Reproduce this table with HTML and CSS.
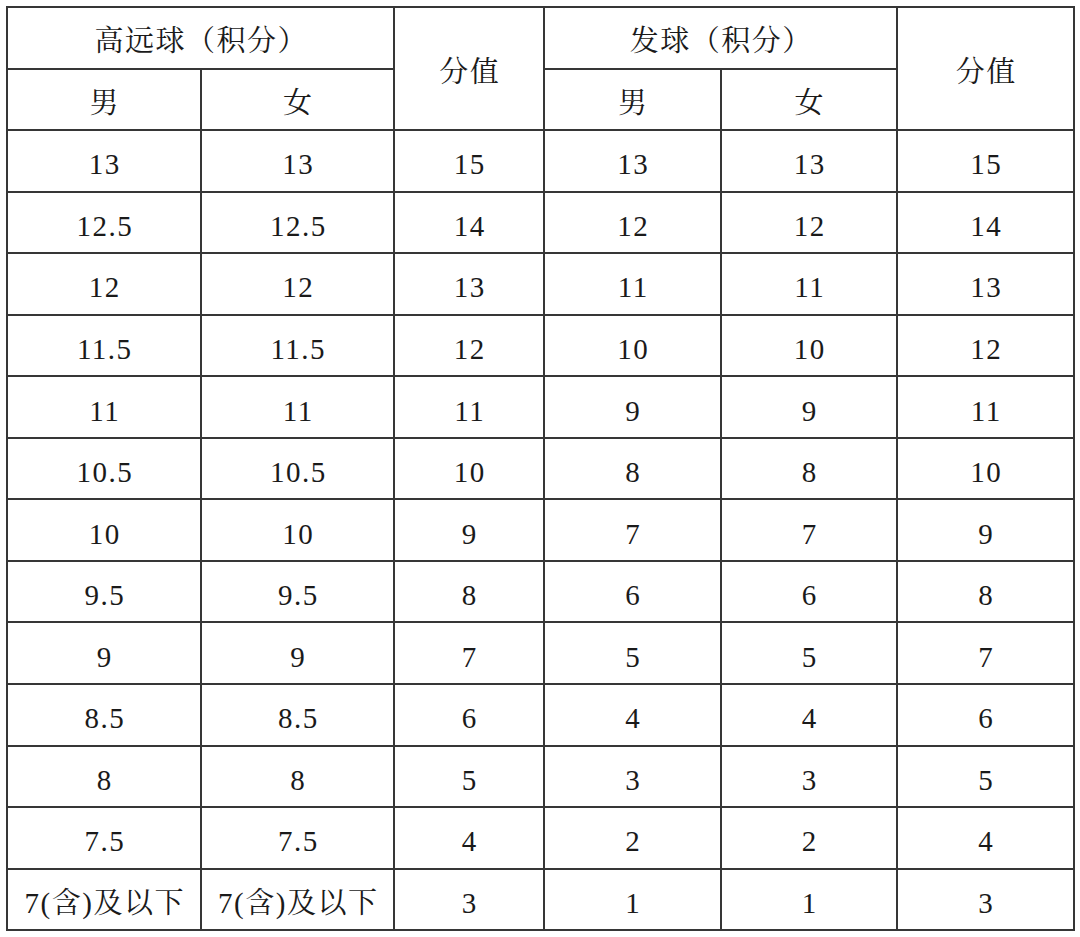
FILE: index.html
```html
<!DOCTYPE html>
<html lang="zh-CN">
<head>
<meta charset="utf-8">
<title>评分表</title>
<link rel="stylesheet" href="styles.css">
</head>
<body>
<table class="score-table">
  <colgroup>
    <col class="c1"><col class="c2"><col class="c3"><col class="c4"><col class="c5"><col class="c6">
  </colgroup>
  <tbody>
    <tr><td colspan="2">高远球（积分）</td><td rowspan="2">分值</td><td colspan="2">发球（积分）</td><td rowspan="2">分值</td></tr>
    <tr><td>男</td><td>女</td><td>男</td><td>女</td></tr>
    <tr><td>13</td><td>13</td><td>15</td><td>13</td><td>13</td><td>15</td></tr>
    <tr><td>12.5</td><td>12.5</td><td>14</td><td>12</td><td>12</td><td>14</td></tr>
    <tr><td>12</td><td>12</td><td>13</td><td>11</td><td>11</td><td>13</td></tr>
    <tr><td>11.5</td><td>11.5</td><td>12</td><td>10</td><td>10</td><td>12</td></tr>
    <tr><td>11</td><td>11</td><td>11</td><td>9</td><td>9</td><td>11</td></tr>
    <tr><td>10.5</td><td>10.5</td><td>10</td><td>8</td><td>8</td><td>10</td></tr>
    <tr><td>10</td><td>10</td><td>9</td><td>7</td><td>7</td><td>9</td></tr>
    <tr><td>9.5</td><td>9.5</td><td>8</td><td>6</td><td>6</td><td>8</td></tr>
    <tr><td>9</td><td>9</td><td>7</td><td>5</td><td>5</td><td>7</td></tr>
    <tr><td>8.5</td><td>8.5</td><td>6</td><td>4</td><td>4</td><td>6</td></tr>
    <tr><td>8</td><td>8</td><td>5</td><td>3</td><td>3</td><td>5</td></tr>
    <tr><td>7.5</td><td>7.5</td><td>4</td><td>2</td><td>2</td><td>4</td></tr>
    <tr><td>7(含)及以下</td><td>7(含)及以下</td><td>3</td><td>1</td><td>1</td><td>3</td></tr>
  </tbody>
</table>
</body>
</html>
```
FILE: styles.css
```css
html, body {
  margin: 0;
  padding: 0;
  background: #ffffff;
}

body {
  padding: 6px 0 0 6px;
}

.score-table {
  border-collapse: collapse;
  table-layout: fixed;
  width: 1067px;
  font-family: "Liberation Serif", "Times New Roman", "DejaVu Serif", "Noto Serif CJK SC", "Noto Sans CJK SC", serif;
  font-size: 29px;
  color: #1a1a1a;
}

.c1 { width: 194px; }
.c2 { width: 193px; }
.c3 { width: 150px; }
.c4 { width: 177px; }
.c5 { width: 176px; }
.c6 { width: 177px; }

.score-table td {
  border: 2px solid #363636;
  height: 51.55px;
  padding: 8px 0 0 1.5px;
  text-align: center;
  vertical-align: middle;
  line-height: 1;
  letter-spacing: 1.5px;
  white-space: nowrap;
}
```
